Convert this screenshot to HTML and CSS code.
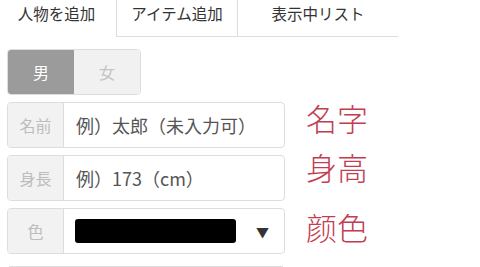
FILE: index.html
```html
<!DOCTYPE html>
<html lang="ja">
<head>
<meta charset="utf-8">
<link rel="stylesheet" href="styles.css">
</head>
<body>
<nav class="tabs">
  <div class="tab tab-plain">人物を追加</div>
  <div class="tab tab-boxed">アイテム追加</div>
  <div class="tab tab-under">表示中リスト</div>
</nav>
<div class="main">
  <div class="form">
    <div class="toggle">
      <div class="seg seg-on">男</div>
      <div class="seg seg-off">女</div>
    </div>
    <div class="group">
      <div class="addon">名前</div>
      <div class="field">例）太郎（未入力可）</div>
    </div>
    <div class="group">
      <div class="addon">身長</div>
      <div class="field">例）173（cm）</div>
    </div>
    <div class="group">
      <div class="addon">色</div>
      <div class="field field-select">
        <div class="swatch"></div>
        <div class="caret">▼</div>
      </div>
    </div>
    <div class="group-cut"></div>
  </div>
  <div class="notes">
    <div class="note note-1">名字</div>
    <div class="note note-2">身高</div>
    <div class="note note-3">颜色</div>
  </div>
</div>
</body>
</html>
```
FILE: styles.css
```css
html, body {
  margin: 0;
  padding: 0;
  background: #fff;
  width: 480px;
  height: 267px;
  overflow: hidden;
  font-family: "Noto Sans CJK JP", "Noto Sans", sans-serif;
}
.tabs {
  display: flex;
  height: 37px;
}
.tab {
  box-sizing: border-box;
  height: 37px;
  padding-top: 3px;
  line-height: 20px;
  font-size: 15.5px;
  color: #333;
  text-align: center;
}
.tab-plain {
  width: 116px;
  padding-right: 3px;
}
.tab-boxed {
  width: 122px;
  border: 1px solid #ddd;
  border-top: none;
}
.tab-under {
  width: 160px;
  border-bottom: 1px solid #ddd;
}
.main {
  display: flex;
  padding-left: 7px;
}
.form {
  width: 278px;
  display: flex;
  flex-direction: column;
}
.toggle {
  margin-top: 12px;
  width: 134px;
  height: 46px;
  box-sizing: border-box;
  display: flex;
  border: 1px solid #ddd;
  border-radius: 4px;
  overflow: hidden;
}
.seg {
  flex: 1;
  display: flex;
  align-items: center;
  justify-content: center;
  font-size: 16px;
}
.seg-on {
  background: #9b9b9b;
  color: #fff;
}
.seg-off {
  background: #f1f1f1;
  color: #c4c4c4;
}
.group {
  margin-top: 7px;
  height: 46px;
  box-sizing: border-box;
  border: 1px solid #ddd;
  border-radius: 4px;
  display: flex;
  overflow: hidden;
}
.addon {
  width: 55px;
  background: #f2f2f2;
  border-right: 1px solid #ddd;
  color: #bdbdbd;
  font-size: 16px;
  display: flex;
  align-items: center;
  justify-content: center;
}
.field {
  flex: 1;
  display: flex;
  align-items: center;
  padding-left: 12px;
  font-size: 18px;
  color: #555;
}
.field-select {
  padding-left: 11px;
}
.swatch {
  width: 161px;
  height: 24px;
  background: #000;
  border-radius: 3px;
}
.caret {
  margin-left: 20px;
  font-size: 13px;
  color: #333;
}
.group-cut {
  margin-top: 12px;
  height: 1px;
  background: #ddd;
  margin-left: 2px;
  margin-right: 2px;
}
.notes {
  margin-left: 21px;
  margin-top: 65px;
  display: flex;
  flex-direction: column;
  font-family: "Noto Sans CJK SC", sans-serif;
  font-size: 31px;
  font-weight: 300;
  line-height: 32px;
  color: #c23d52;
}
.note-2 {
  margin-top: 17px;
}
.note-3 {
  margin-top: 28px;
}
```
